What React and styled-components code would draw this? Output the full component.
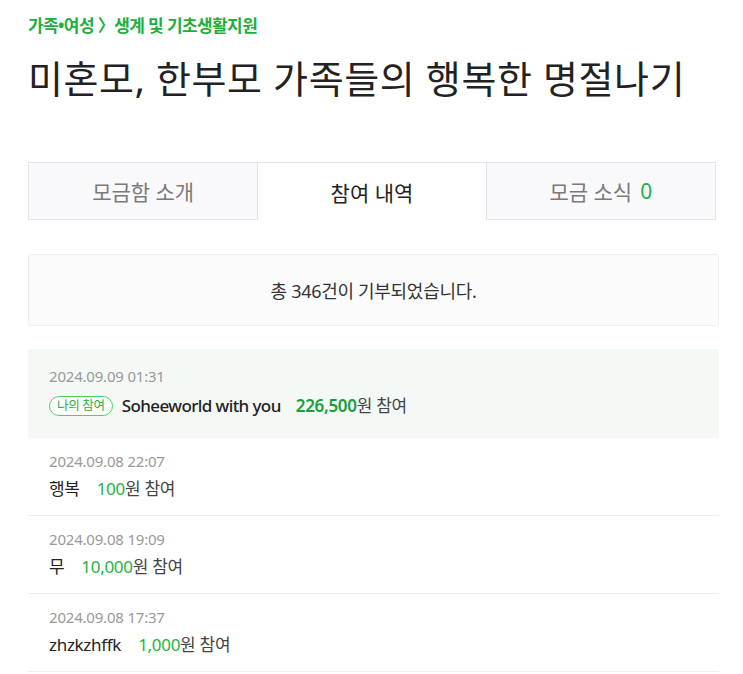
import styled, { createGlobalStyle } from "styled-components";

const Global = createGlobalStyle`
  html, body { margin: 0; padding: 0; background: #fff; }
  body {
    font-family: "Noto Sans", "Noto Sans CJK KR", sans-serif;
    color: #222;
  }
`;

const Page = styled.div`
  padding: 12px 24px 0 28px;
  width: 691px;
`;

const Crumb = styled.div`
  font-size: 17px;
  font-weight: 700;
  color: #1db03e;
  line-height: 28px;
  letter-spacing: -0.6px;
`;

const Title = styled.h1`
  margin: 13px 0 0;
  font-size: 38px;
  font-weight: 400;
  line-height: 50px;
  letter-spacing: 0.6px;
  color: #222;
`;

const Tabs = styled.div`
  display: grid;
  grid-template-columns: repeat(3, 1fr);
  margin-top: 59px;
  width: 688px;
`;

const Tab = styled.div`
  height: 58px;
  display: flex;
  align-items: center;
  justify-content: center;
  font-size: 21px;
  box-sizing: border-box;
  border: 1px solid #e4e4e8;
  border-bottom: ${(p) => (p.$active ? "none" : "1px solid #e4e4e8")};
  border-left: ${(p) => (p.$active || p.$first ? "1px solid #e4e4e8" : "none")};
  border-right: ${(p) => (p.$active || p.$last ? "1px solid #e4e4e8" : "none")};
  background: ${(p) => (p.$active ? "#fff" : "#f9f9fc")};
  color: ${(p) => (p.$active ? "#222" : "#7a7a7a")};
`;

const Count = styled.span`
  color: #1db03e;
  margin-left: 8px;
`;

const Summary = styled.div`
  margin-top: 34px;
  height: 72px;
  box-sizing: border-box;
  border: 1px solid #eeeeee;
  border-radius: 2px;
  background: #fbfbfb;
  display: flex;
  align-items: center;
  justify-content: center;
  font-size: 18px;
  color: #333;
  letter-spacing: -0.3px;
`;

const List = styled.ul`
  list-style: none;
  margin: 23px 0 0;
  padding: 0;
`;

const Row = styled.li`
  box-sizing: border-box;
  height: ${(p) => (p.$mine ? "89px" : "78px")};
  padding: ${(p) => (p.$mine ? "17px 21px 0" : "13px 21px 0")};
  background: ${(p) => (p.$mine ? "#f4f9f5" : "#fff")};
  border-bottom: ${(p) => (p.$mine ? "none" : "1px solid #eeeeee")};
`;

const Date = styled.div`
  font-size: 15px;
  color: #999;
  line-height: 20px;
  letter-spacing: -0.2px;
`;

const Line = styled.div`
  display: flex;
  align-items: center;
  margin-top: ${(p) => (p.$mine ? "8px" : "6px")};
  font-size: 17px;
  line-height: 24px;
  letter-spacing: -0.3px;
`;

const Badge = styled.span`
  display: inline-flex;
  align-items: center;
  height: 20px;
  padding: 0 7px;
  border: 1px solid #4cd168;
  border-radius: 11px;
  font-size: 12.5px;
  color: #1db03e;
  margin-right: 9px;
  box-sizing: border-box;
  background: #fff;
`;

const Name = styled.span`
  color: #222;
  font-weight: ${(p) => (p.$bold ? 500 : 400)};
  letter-spacing: ${(p) => (p.$bold ? "-0.6px" : "-0.3px")};
  margin-right: ${(p) => (p.$bold ? "15px" : "17px")};
`;

const Amount = styled.span`
  color: ${(p) => (p.$bold ? "#1a9e3a" : "#26b33f")};
  font-weight: ${(p) => (p.$bold ? 600 : 400)};
`;

const Suffix = styled.span`
  color: #444;
`;

const rows = [
  { date: "2024.09.09 01:31", name: "Soheeworld with you", amount: "226,500", mine: true },
  { date: "2024.09.08 22:07", name: "행복", amount: "100" },
  { date: "2024.09.08 19:09", name: "무", amount: "10,000" },
  { date: "2024.09.08 17:37", name: "zhzkzhffk", amount: "1,000" },
];

export default function App() {
  return (
    <>
      <Global />
      <Page>
        <Crumb>가족•여성 〉생계 및 기초생활지원</Crumb>
        <Title>미혼모, 한부모 가족들의 행복한 명절나기</Title>
        <Tabs>
          <Tab $first>모금함 소개</Tab>
          <Tab $active>참여 내역</Tab>
          <Tab $last>
            모금 소식<Count>0</Count>
          </Tab>
        </Tabs>
        <Summary>총 346건이 기부되었습니다.</Summary>
        <List>
          {rows.map((r) => (
            <Row key={r.date} $mine={r.mine}>
              <Date>{r.date}</Date>
              <Line $mine={r.mine}>
                {r.mine && <Badge>나의 참여</Badge>}
                <Name $bold={r.mine}>{r.name}</Name>
                <Amount $bold={r.mine}>{r.amount}</Amount>
                <Suffix>원 참여</Suffix>
              </Line>
            </Row>
          ))}
        </List>
      </Page>
    </>
  );
}
